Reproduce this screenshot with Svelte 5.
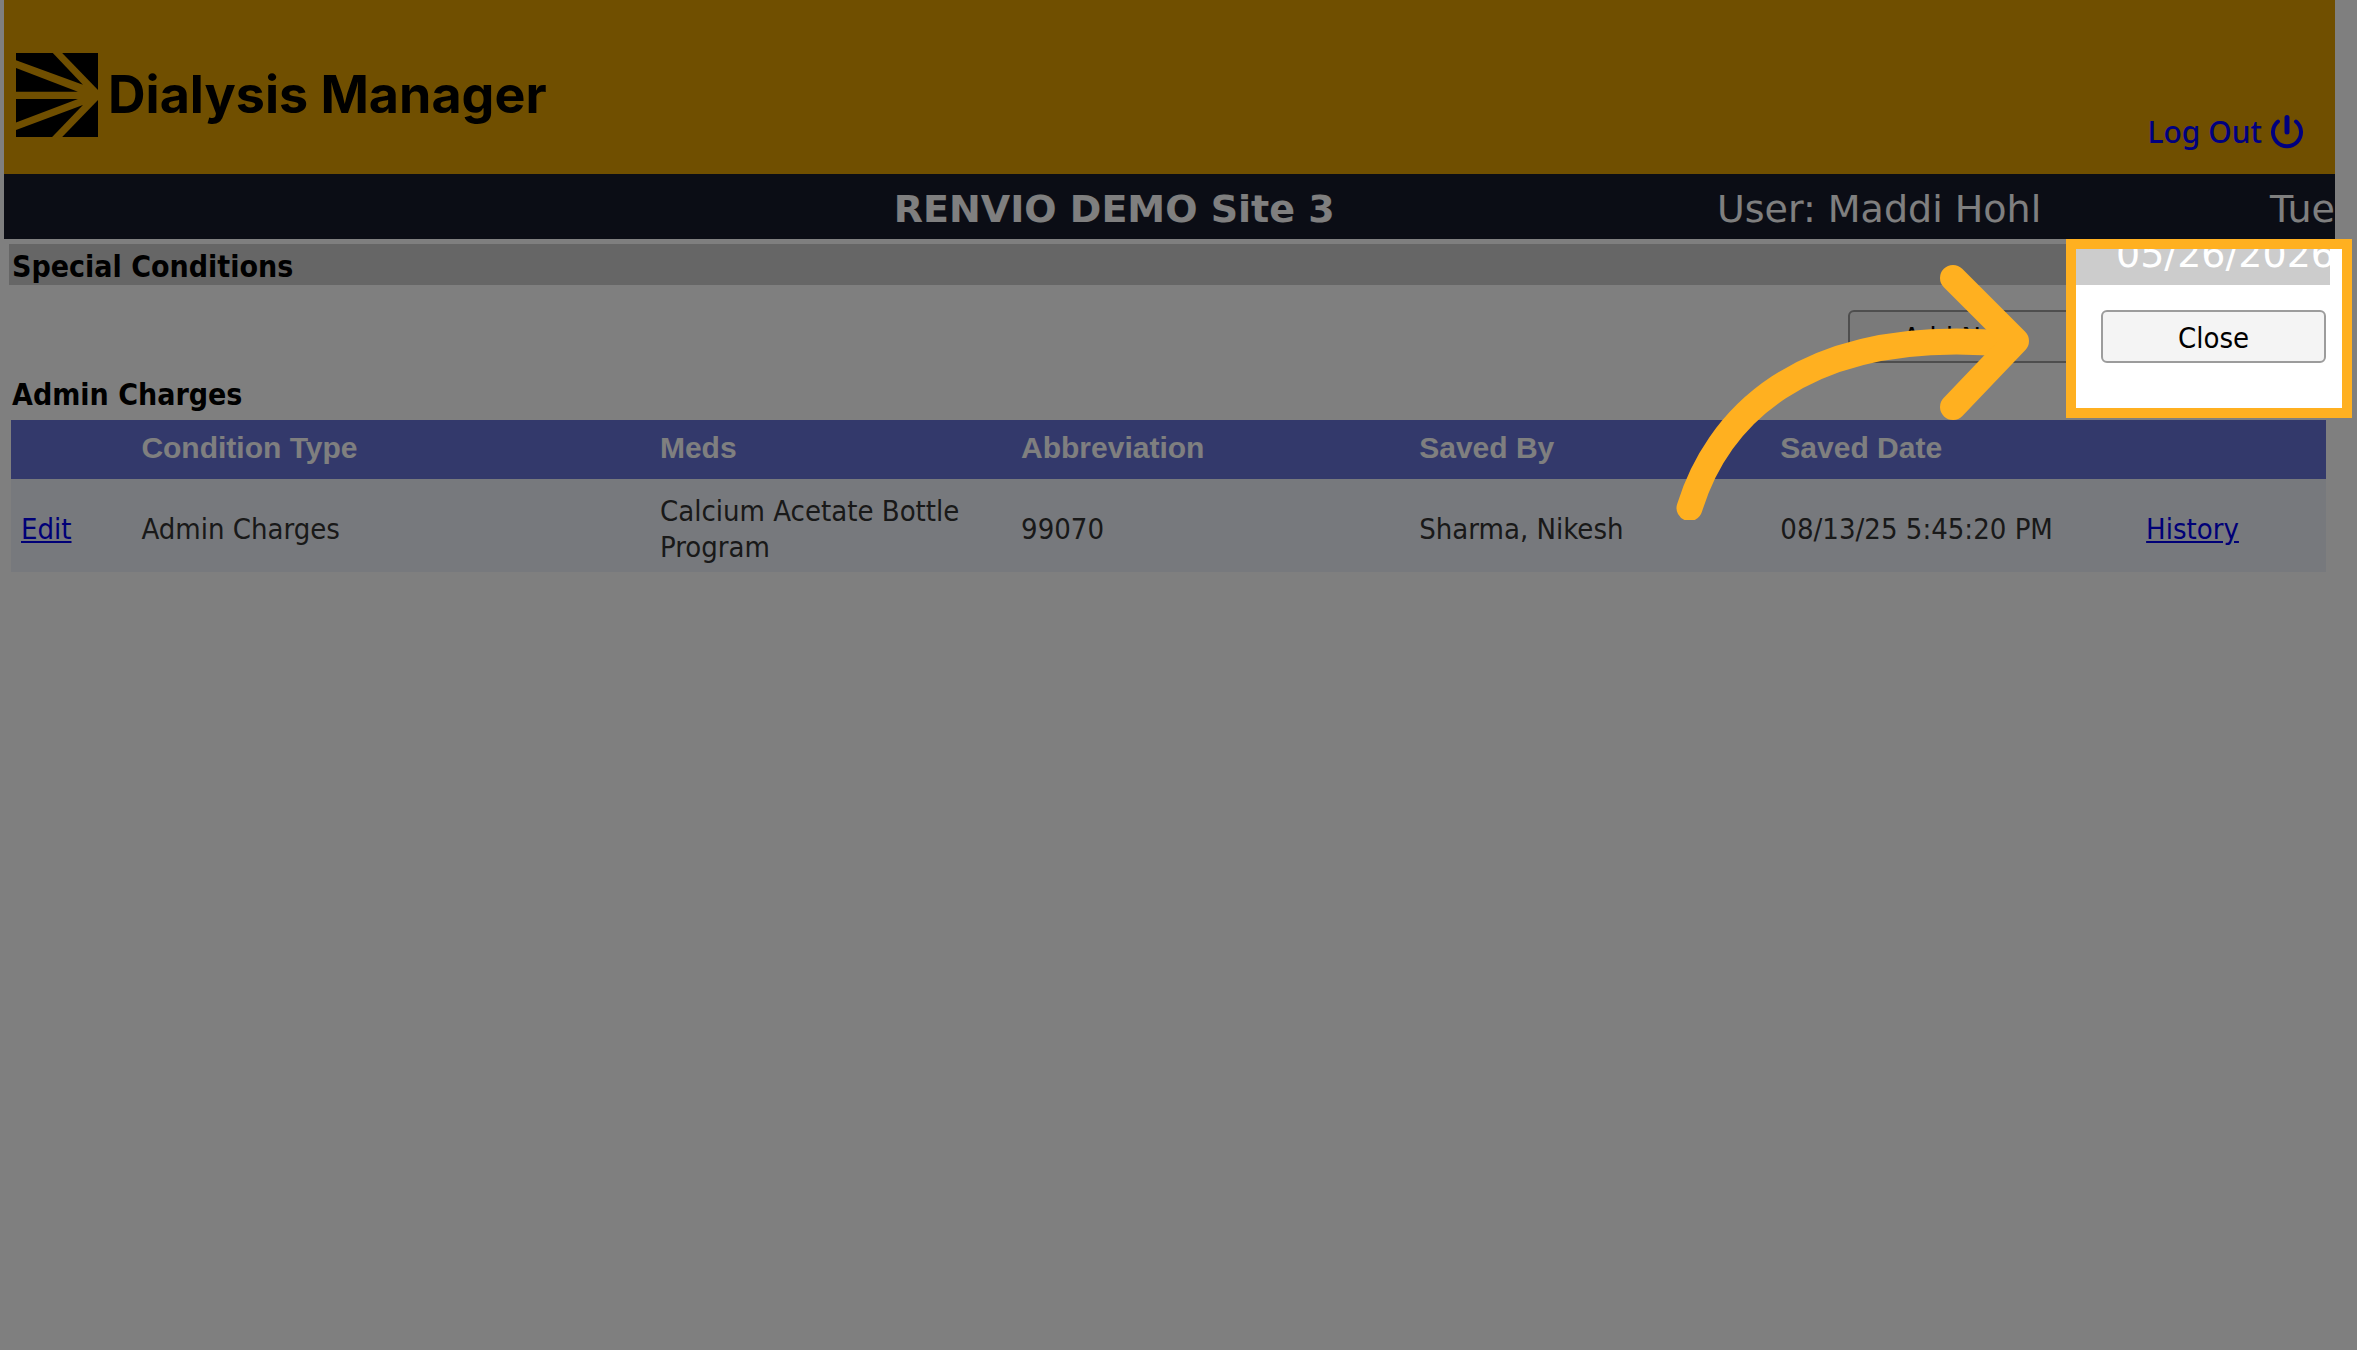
<script lang="ts">
	type Condition = {
		id: number;
		type: string;
		meds: string;
		abbreviation: string;
		savedBy: string;
		savedDate: string;
	};

	const columns = [
		{ label: '', width: 5.2 },
		{ label: 'Condition Type', width: 22.4 },
		{ label: 'Meds', width: 15.6 },
		{ label: 'Abbreviation', width: 17.2 },
		{ label: 'Saved By', width: 15.6 },
		{ label: 'Saved Date', width: 15.8 },
		{ label: '', width: 8.2 }
	];

	const conditions: Condition[] = [
		{
			id: 1,
			type: 'Admin Charges',
			meds: 'Calcium Acetate Bottle Program',
			abbreviation: '99070',
			savedBy: 'Sharma, Nikesh',
			savedDate: '08/13/25 5:45:20 PM'
		}
	];
</script>

<div class="page">
	<header class="banner">
		<div class="brand">
			<svg class="logo" viewBox="0 0 245 254" preserveAspectRatio="none" aria-hidden="true">
				<path d="M0 0H110L200 96L0 22Z" />
				<path d="M138 0H245V112Z" />
				<path d="M0 45L185 117H0Z" />
				<path d="M0 139H185L0 210Z" />
				<path d="M0 233L200 157L108 254H0Z" />
				<path d="M245 142V254H138Z" />
			</svg>
			<span>Dialysis Manager</span>
		</div>
		<a class="logout" href="#logout">
			Log Out
			<svg width="34" height="34" viewBox="0 0 34 34" fill="none" stroke="currentColor" stroke-width="5" stroke-linecap="round" aria-hidden="true">
				<path d="M17 2.5V17" />
				<path d="M8 6.5A14 14 0 1 0 26 6.5" stroke-width="4" />
			</svg>
		</a>
	</header>

	<div class="site-bar">
		<strong class="site">RENVIO DEMO Site 3</strong>
		<span class="user">User: Maddi Hohl</span>
		<span class="date">Tue 05/26/2026</span>
	</div>

	<main>
		<h1>Special Conditions</h1>
		<div class="content">
			<div class="actions">
				<button type="button">Add New</button>
				<button type="button">Close</button>
			</div>
			<h2>Admin Charges</h2>
			<table>
				<colgroup>
					{#each columns as col}
						<col style="width: {col.width}%" />
					{/each}
				</colgroup>
				<thead>
					<tr>
						{#each columns as col}
							<th>{col.label}</th>
						{/each}
					</tr>
				</thead>
				<tbody>
					{#each conditions as row (row.id)}
						<tr>
							<td><a href="#edit">Edit</a></td>
							<td>{row.type}</td>
							<td>{row.meds}</td>
							<td>{row.abbreviation}</td>
							<td>{row.savedBy}</td>
							<td>{row.savedDate}</td>
							<td><a href="#history">History</a></td>
						</tr>
					{/each}
				</tbody>
			</table>
		</div>
	</main>

	<!-- walkthrough layer: dims everything but the spotlight -->
	<div class="spotlight"></div>
	<svg class="arrow" width="360" height="260" viewBox="0 0 360 260" fill="none" stroke="#ffb020" stroke-width="26" stroke-linecap="round" stroke-linejoin="round" aria-hidden="true">
		<path d="M19.5 248C45 165 125 64 340 84" />
		<path d="M283 18L346 81L283 147" />
	</svg>
</div>

<style>
	:global(body) {
		margin: 0;
		background: #fff;
	}
	.page {
		position: relative;
		box-sizing: border-box;
		min-height: 100vh;
		padding: 0 22px 0 4px;
		overflow: hidden;
		font-family: Tahoma, "DejaVu Sans Condensed", "Noto Sans", sans-serif;
		font-size: 29px;
		line-height: 36px;
		color: #333;
	}
	.banner {
		display: flex;
		justify-content: space-between;
		align-items: flex-end;
		box-sizing: border-box;
		height: 174px;
		padding: 0 31px 24px 12px;
		background: #e09e00;
	}
	.brand {
		display: flex;
		align-items: center;
		gap: 10px;
		padding-bottom: 12px;
		font-family: Inter, sans-serif;
		font-size: 52px;
		font-weight: 700;
		line-height: 86px;
		color: #000;
	}
	.logo {
		width: 82px;
		height: 84px;
	}
	.logout {
		display: flex;
		align-items: center;
		gap: 8px;
		font-family: "Noto Sans", sans-serif;
		font-size: 30px;
		font-weight: 500;
		color: #00f;
		text-decoration: none;
	}
	.site-bar {
		display: grid;
		grid-template-columns: 38% 1fr 508px 110px;
		grid-template-areas: "left site user date";
		height: 65px;
		padding-top: 13px;
		box-sizing: border-box;
		background: #161a2a;
		color: #fff;
		font-family: Verdana, "DejaVu Sans", sans-serif;
		font-size: 38px;
		line-height: 45px;
	}
	.site {
		grid-area: site;
		padding-left: 4px;
	}
	.user {
		grid-area: user;
	}
	.date {
		grid-area: date;
		display: flex;
		justify-content: flex-end;
		text-align: right;
	}
	main {
		padding: 5px 5px 0;
	}
	h1,
	h2 {
		margin: 0;
		font-size: 30px;
		font-weight: 700;
		color: #000;
	}
	h1 {
		padding: 5px 3px 0;
		background: #ccc;
	}
	.content {
		padding: 25px 4px 0 2px;
	}
	.actions {
		display: flex;
		justify-content: flex-end;
		gap: 28px;
		margin-bottom: 14px;
	}
	button {
		width: 225px;
		height: 53px;
		padding: 3px 0 0;
		border: 2px solid #9c9c9c;
		border-radius: 6px;
		background: #f4f4f4;
		color: #000;
		font: inherit;
	}
	h2 {
		padding: 0 1px;
		margin-bottom: 7px;
	}
	table {
		width: 100%;
		table-layout: fixed;
		border-collapse: collapse;
	}
	th,
	td {
		padding: 10px;
		text-align: left;
	}
	th {
		height: 43px;
		padding-top: 6px;
		background: #6672d6;
		color: #fff;
		font-family: Arial, "Liberation Sans", sans-serif;
		font-size: 30px;
	}
	td {
		height: 72px;
		padding-top: 14px;
		padding-bottom: 7px;
		background: #eff2fa;
	}
	td a {
		color: #00e;
	}
	.spotlight {
		position: absolute;
		top: 239px;
		right: 5px;
		width: 266px;
		height: 159px;
		border: 10px solid #ffb020;
		box-shadow: 0 0 0 4000px rgba(0, 0, 0, 0.5);
	}
	.arrow {
		position: absolute;
		top: 260px;
		right: 327px;
	}
</style>
